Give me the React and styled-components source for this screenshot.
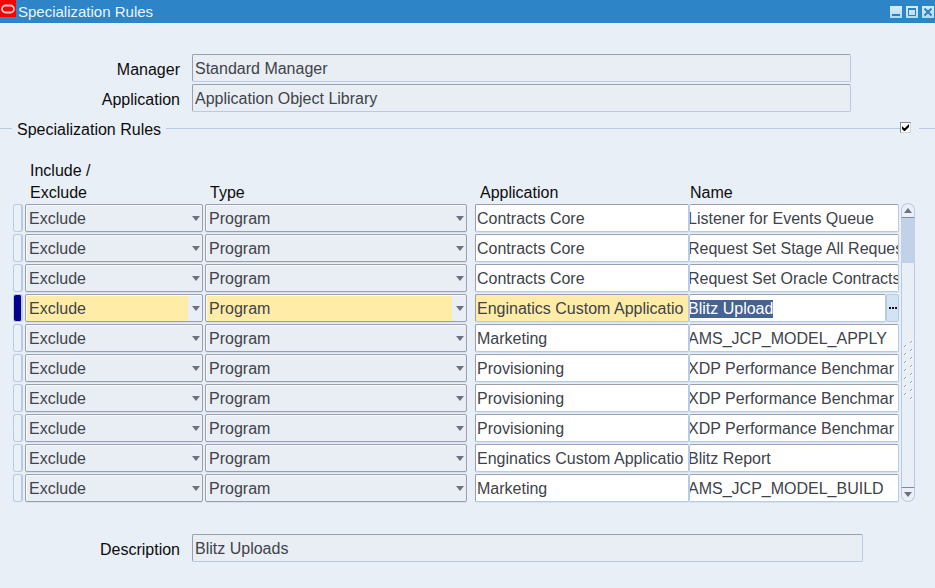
import React, { useEffect, useRef, useState } from "react";
import styled, { createGlobalStyle, css } from "styled-components";

const initialRows = [
  { application: "Contracts Core", name: "Listener for Events Queue" },
  { application: "Contracts Core", name: "Request Set Stage All Reques" },
  { application: "Contracts Core", name: "Request Set Oracle Contracts" },
  { application: "Enginatics Custom Applicatio", name: "Blitz Upload" },
  { application: "Marketing", name: "AMS_JCP_MODEL_APPLY" },
  { application: "Provisioning", name: "XDP Performance Benchmar" },
  { application: "Provisioning", name: "XDP Performance Benchmar" },
  { application: "Provisioning", name: "XDP Performance Benchmar" },
  { application: "Enginatics Custom Applicatio", name: "Blitz Report" },
  { application: "Marketing", name: "AMS_JCP_MODEL_BUILD" },
];

const ACTIVE_ROW = 3;

const Arrow = ({ up }) => (
  <svg width="8" height="5" viewBox="0 0 8 5" aria-hidden="true">
    <path d={up ? "M0 5 L4 0 L8 5 Z" : "M0 0 H8 L4 5 Z"} fill="#6d7280" />
  </svg>
);

const DropDown = ({ label, value, options, active }) => {
  const [selected, setSelected] = useState(value);
  return (
    <SelectWrap>
      <Select
        aria-label={label}
        value={selected}
        $active={active}
        onChange={(e) => setSelected(e.target.value)}
      >
        {options.map((option) => (
          <option key={option}>{option}</option>
        ))}
      </Select>
      <Arrow />
    </SelectWrap>
  );
};

const Rule = ({ rule, index }) => {
  const active = index === ACTIVE_ROW;
  const nameRef = useRef();

  useEffect(() => {
    if (active) {
      nameRef.current.focus();
      nameRef.current.select();
    }
  }, [active]);

  return (
    <tr>
      <td>
        <RowMarker $active={active} aria-label={`Record ${index + 1}`} />
      </td>
      <td>
        <DropDown
          label="Include / Exclude"
          value="Exclude"
          options={["Include", "Exclude"]}
          active={active}
        />
      </td>
      <TypeCell>
        <DropDown
          label="Type"
          value="Program"
          options={["Program", "Request Type", "Oracle ID", "User"]}
          active={active}
        />
      </TypeCell>
      <td>
        <CellInput
          aria-label="Application"
          defaultValue={rule.application}
          $active={active}
        />
      </td>
      <td>
        <NameCell>
          <CellInput
            ref={nameRef}
            aria-label="Name"
            defaultValue={rule.name}
            $scrolled
          />
          {active && (
            <LovButton aria-label="List of values">
              <svg width="8" height="2" viewBox="0 0 8 2" aria-hidden="true">
                <path d="M0 0h2v2h-2z M3 0h2v2h-2z M6 0h2v2h-2z" fill="#1b0c14" />
              </svg>
            </LovButton>
          )}
        </NameCell>
      </td>
    </tr>
  );
};

const Grip = () => (
  <svg width="10" height="62" viewBox="0 0 10 62" aria-hidden="true">
    {[0, 1, 2, 3, 4, 5, 6, 7].map((i) => (
      <g key={i} transform={`translate(0 ${i * 8})`}>
        <path d="M7 3l2-2" stroke="#9aa1ad" />
        <path d="M8 4l2-2" stroke="#fff" />
        {i < 7 && <path d="M1 7l2-2" stroke="#9aa1ad" />}
        {i < 7 && <path d="M2 8l2-2" stroke="#fff" />}
      </g>
    ))}
  </svg>
);

const App = () => {
  const [checked, setChecked] = useState(true);

  return (
    <Window>
      <GlobalStyle />
      <TitleBar>
        <Logo>
          <svg width="16" height="17" viewBox="0 0 16 17" aria-hidden="true">
            <rect width="16" height="17" fill="#f20505" />
            <rect
              x="2"
              y="5.5"
              width="12"
              height="7"
              rx="3.5"
              fill="none"
              stroke="#ffc4c4"
              strokeWidth="1.8"
            />
          </svg>
        </Logo>
        <Title>Specialization Rules</Title>
        <WindowButton aria-label="Minimize">
          <svg width="12" height="12" viewBox="0 0 12 12">
            <path d="M2 9h8" stroke="#2d7fc0" strokeWidth="2" />
          </svg>
        </WindowButton>
        <WindowButton aria-label="Maximize">
          <svg width="12" height="12" viewBox="0 0 12 12">
            <path d="M2.5 3v6.5h7V3" fill="none" stroke="#2d7fc0" />
            <path d="M2 3h8" stroke="#2d7fc0" strokeWidth="2" />
          </svg>
        </WindowButton>
        <WindowButton aria-label="Close">
          <svg width="12" height="12" viewBox="0 0 12 12">
            <path d="M2.5 2.5l7 7M9.5 2.5l-7 7" stroke="#2d7fc0" strokeWidth="2" />
          </svg>
        </WindowButton>
      </TitleBar>

      <Header>
        <Field>
          <label htmlFor="manager">Manager</label>
          <TextInput id="manager" defaultValue="Standard Manager" readOnly />
        </Field>
        <Field>
          <label htmlFor="application">Application</label>
          <TextInput
            id="application"
            defaultValue="Application Object Library"
            readOnly
          />
        </Field>
      </Header>

      <Section>
        <Line $width="12px" />
        <h2>Specialization Rules</h2>
        <Line />
        <CheckWrap>
          <input
            type="checkbox"
            aria-label="Specialization Rules"
            checked={checked}
            onChange={() => setChecked(!checked)}
          />
          {checked && (
            <svg width="11" height="11" viewBox="0 0 11 11" aria-hidden="true">
              <path d="M2 4v3l2 2h1l4-4V2L5 6H4z" fill="#000" />
            </svg>
          )}
        </CheckWrap>
        <Line $width="16px" />
      </Section>

      <Rules>
        <Table>
          <colgroup>
            <Col $width="12px" />
            <Col $width="180px" />
            <Col $width="270px" />
            <Col $width="214px" />
            <col />
          </colgroup>
          <thead>
            <tr>
              <td />
              <th>
                Include /<br />
                Exclude
              </th>
              <th>Type</th>
              <th>Application</th>
              <NameHead>Name</NameHead>
            </tr>
          </thead>
          <tbody>
            {initialRows.map((rule, index) => (
              <Rule key={index} rule={rule} index={index} />
            ))}
          </tbody>
        </Table>
        <ScrollBar>
          <ScrollButton aria-label="Scroll up" $up>
            <Arrow up />
          </ScrollButton>
          <Thumb />
          <Track>
            <Grip />
          </Track>
          <ScrollButton aria-label="Scroll down">
            <Arrow />
          </ScrollButton>
        </ScrollBar>
      </Rules>

      <Footer>
        <Field>
          <label htmlFor="description">Description</label>
          <TextInput id="description" defaultValue="Blitz Uploads" readOnly />
        </Field>
      </Footer>
    </Window>
  );
};

export default App;

const GlobalStyle = createGlobalStyle`
  * {
    box-sizing: border-box;
  }

  body {
    margin: 0;
    background: #e9eff6;
  }

  body, input, select, button {
    font-family: "Liberation Sans", Arial, sans-serif;
    font-size: 16px;
  }

  button {
    padding: 0;
    display: flex;
    align-items: center;
    justify-content: center;
  }

  input, select {
    outline: none;
    border-radius: 2px;
    color: #40434a;
  }

  svg {
    display: block;
  }
`;

const bevel = css`
  border: 1px solid;
  border-color: #9b9fae #b9cbe4 #b9cbe4 #9b9fae;
`;

const Window = styled.main`
  min-height: 100vh;
  background: #e9eff6;
  color: #0c0c0e;
`;

const TitleBar = styled.header`
  display: flex;
  align-items: center;
  gap: 4px;
  height: 23px;
  padding-right: 1px;
  background: #2d84c6;
`;

const Logo = styled.div`
  align-self: flex-start;
`;

const Title = styled.h1`
  flex: 1;
  margin: 0 0 0 -2px;
  font-size: 15px;
  font-weight: 400;
  line-height: 23px;
  color: #eaf5ff;
`;

const WindowButton = styled.button`
  width: 12px;
  height: 12px;
  border: 0;
  background: linear-gradient(#d9ecfa, #b4d8f3);
`;

const Header = styled.section`
  display: grid;
  gap: 2px;
  padding: 31px 84px 0 0;
`;

const Footer = styled.section`
  padding: 30px 72px 24px 0;
`;

const Field = styled.div`
  display: grid;
  grid-template-columns: 180px 1fr;
  column-gap: 12px;

  label {
    text-align: right;
    line-height: 32px;
    height: 28px;
  }
`;

const TextInput = styled.input`
  ${bevel}
  width: 100%;
  height: 28px;
  padding: 2px 2px 0;
  background: #e9eef5;
`;

const Section = styled.div`
  display: flex;
  align-items: center;
  height: 24px;
  margin-top: 4px;

  h2 {
    margin: 0 5px;
    padding-top: 4px;
    font-size: 16px;
    font-weight: 400;
    line-height: 22px;
  }
`;

const Line = styled.div`
  height: 1px;
  background: #b9cbe4;
  ${({ $width }) => ($width ? `width: ${$width};` : "flex: 1;")}
`;

const CheckWrap = styled.span`
  position: relative;
  margin: 0 8px 2px 0;

  input {
    appearance: none;
    display: block;
    width: 11px;
    height: 11px;
    margin: 0;
    border: 1px solid;
    border-color: #85888d #d3d3d3 #d3d3d3 #85888d;
    border-radius: 0;
    background: #fff;
  }

  svg {
    position: absolute;
    top: 0;
    left: 0;
    pointer-events: none;
  }
`;

const Rules = styled.section`
  display: flex;
  align-items: flex-end;
  gap: 2px;
  padding: 19px 20px 0 13px;
`;

const Table = styled.table`
  flex: 1;
  min-width: 0;
  table-layout: fixed;
  border-collapse: collapse;

  thead tr {
    height: 45px;
  }

  th {
    padding: 0 0 0 5px;
    font-weight: 400;
    line-height: 22px;
    text-align: left;
    vertical-align: bottom;
  }

  td {
    padding: 0;
    vertical-align: top;
  }

  tbody td {
    height: 30px;
  }
`;

const Col = styled.col`
  width: ${({ $width }) => $width};
`;

const NameHead = styled.th`
  && {
    padding-left: 1px;
  }
`;

const RowMarker = styled.button`
  width: 10px;
  height: 28px;
  border: 1px solid #b9cbe4;
  border-right-width: 2px;
  border-radius: 3px;
  background: ${({ $active }) => ($active ? "#00008b" : "#e9f0f6")};
`;

const SelectWrap = styled.div`
  position: relative;
  margin-right: 2px;

  svg {
    position: absolute;
    right: 3px;
    top: 12px;
    pointer-events: none;
  }
`;

const TypeCell = styled.td`
  && {
    padding-right: 6px;
  }
`;

const Select = styled.select`
  appearance: none;
  display: block;
  width: 100%;
  height: 28px;
  padding: 0 16px 0 3px;
  border: 1px solid #9b9fae;
  background: ${({ $active }) =>
    $active
      ? "linear-gradient(to left, #e9eff6 14px, #ffeca6 14px)"
      : "#e9eef5"};
  box-shadow: inset 1px 1px 0 #f8fafd, 0 1px 0 #d5e1ef;
`;

const CellInput = styled.input`
  ${bevel}
  display: block;
  width: 100%;
  min-width: 0;
  height: 28px;
  padding: 2px 0 0 1px;
  background: ${({ $active }) => ($active ? "#ffeca6" : "#fff")};
  box-shadow: 0 1px 0 #d5e1ef;

  ${({ $scrolled }) =>
    $scrolled &&
    css`
      padding-left: 0;
      border-left-color: #b9cbe4;
      text-indent: -2px;
      line-height: 22px;
    `}

  &::selection {
    background: #466391;
    color: #fff;
  }
`;

const NameCell = styled.div`
  display: flex;
`;

const LovButton = styled.button`
  flex: 0 0 13px;
  height: 28px;
  border: 1px solid #b9cbe4;
  border-radius: 2px;
  background: #d3e3f3;
`;

const ScrollBar = styled.div`
  display: flex;
  flex-direction: column;
  width: 14px;
  height: 299px;
  margin-bottom: 2px;
`;

const ScrollButton = styled.button`
  width: 14px;
  height: 15px;
  border: 1px solid #b9cbe4;
  background: #eaf0f6;
  ${({ $up }) =>
    $up
      ? "border-bottom-color: #7f8ba0; border-radius: 7px 7px 0 0;"
      : "border-top-color: #7f8ba0; border-radius: 0 0 7px 7px;"}
`;

const Thumb = styled.div`
  height: 45px;
  background: #c0d1e8;
`;

const Track = styled.div`
  flex: 1;
  display: flex;
  justify-content: center;
  padding-top: 77px;
  border: solid #b9cbe4;
  border-width: 0 1px;
  background: #e9eff6;
`;
